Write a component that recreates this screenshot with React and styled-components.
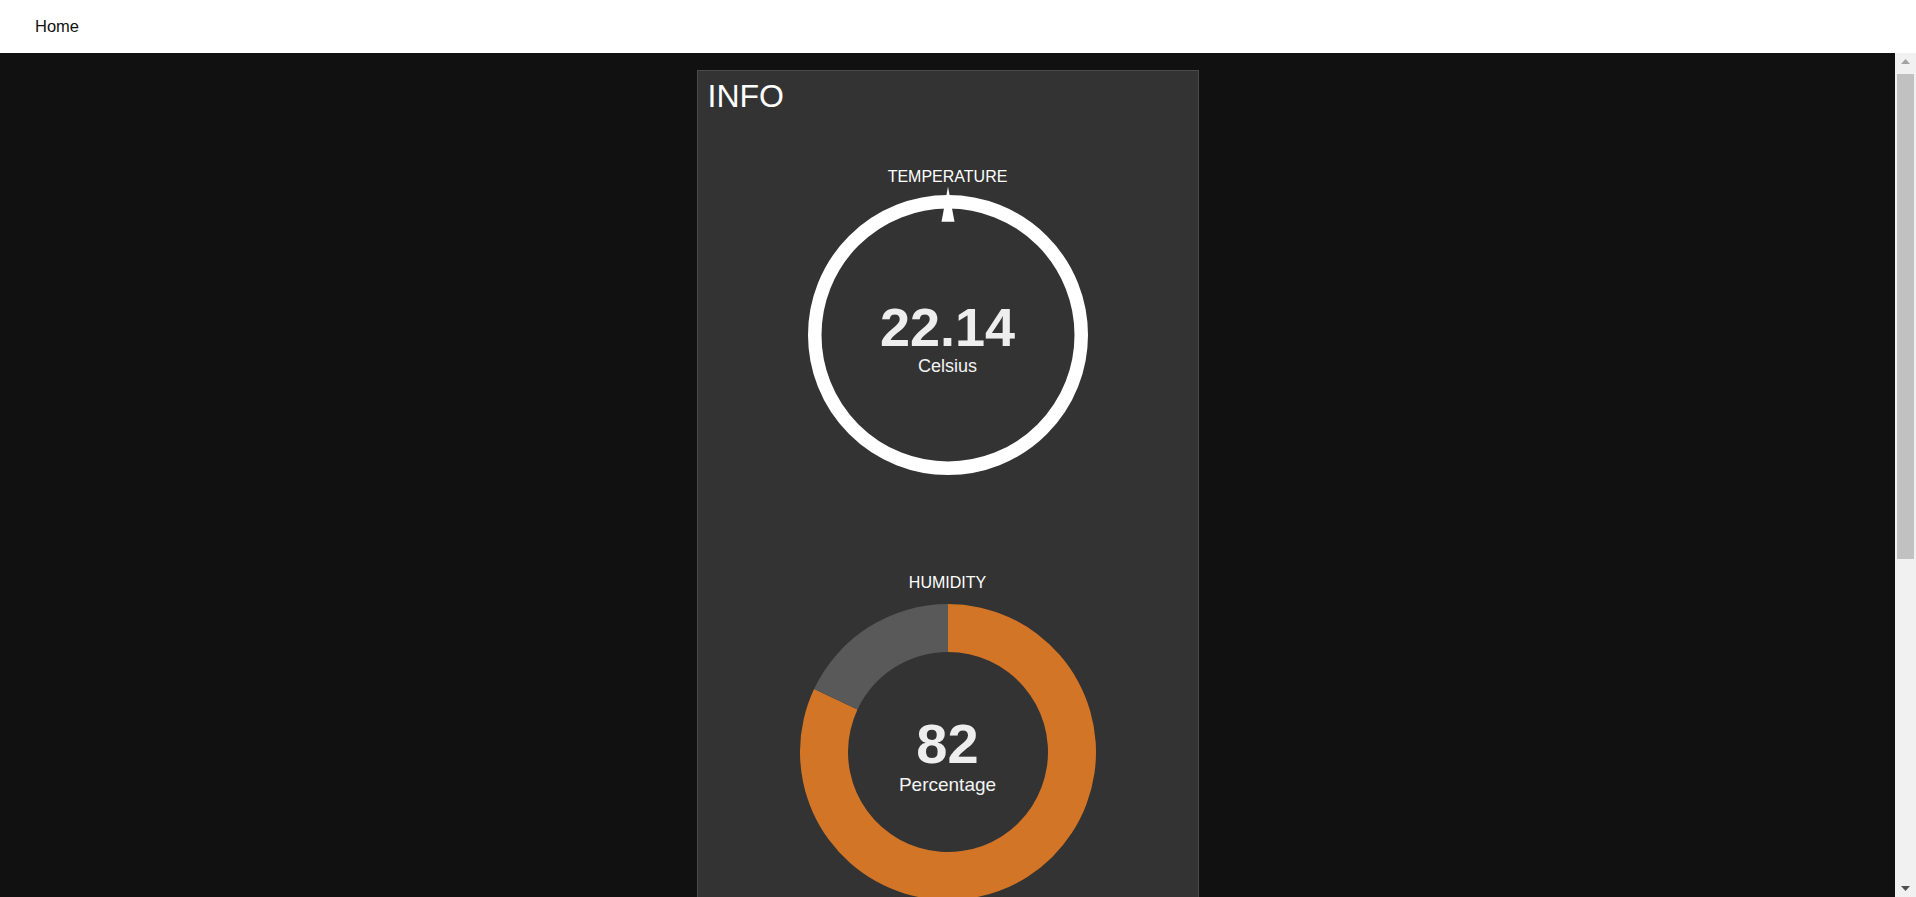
import React from 'react';
import styled, { createGlobalStyle } from 'styled-components';

const GlobalStyle = createGlobalStyle`
	html, body {
		margin: 0;
		height: 100%;
		overflow: hidden;
		font-family: 'Liberation Sans', Arial, sans-serif;
	}
`;

const readings = [
	{ id: 'temp', label: 'TEMPERATURE', value: '22.14', unit: 'Celsius', kind: 'ring' },
	{ id: 'hum', label: 'HUMIDITY', value: '82', unit: 'Percentage', kind: 'donut', percent: 82 },
];

// point on a circle, angle in degrees clockwise from 12 o'clock
const polar = (cx, cy, r, deg) => {
	const a = (deg * Math.PI) / 180;
	return [cx + r * Math.sin(a), cy - r * Math.cos(a)];
};

const sectorPath = (cx, cy, rOut, rIn, from, to) => {
	const large = to - from > 180 ? 1 : 0;
	const [x0, y0] = polar(cx, cy, rOut, from);
	const [x1, y1] = polar(cx, cy, rOut, to);
	const [x2, y2] = polar(cx, cy, rIn, to);
	const [x3, y3] = polar(cx, cy, rIn, from);
	return `M${x0} ${y0} A${rOut} ${rOut} 0 ${large} 1 ${x1} ${y1} L${x2} ${y2} A${rIn} ${rIn} 0 ${large} 0 ${x3} ${y3} Z`;
};

const RingGauge = () => (
	<svg width='300' height='300' viewBox='0 0 300 300'>
		<circle cx='150' cy='149' r='133.25' fill='none' stroke='#ffffff' strokeWidth='13.5' />
		<polygon points='150,0.7 143.5,35.7 156.5,35.7' fill='#ffffff' />
	</svg>
);

const DonutGauge = ({ percent }) => {
	const cut = (percent / 100) * 360;
	return (
		<svg width='296' height='296' viewBox='0 0 296 296'>
			<path d={sectorPath(148, 148, 148, 100, 0, cut)} fill='#d37526' />
			<path d={sectorPath(148, 148, 148, 100, cut, 360)} fill='#595959' />
		</svg>
	);
};

const Arrow = ({ up, color }) => (
	<svg width='9' height='5' viewBox='0 0 9 5'>
		<polygon points={up ? '4.5,0 9,5 0,5' : '0,0 9,0 4.5,5'} fill={color} />
	</svg>
);

const App = () => {
	return (
		<>
			<GlobalStyle />
			<Shell>
				<TopBar>
					<NavLink href='#'>Home</NavLink>
				</TopBar>
				<Body>
					<Main>
						<Panel>
							<Title>INFO</Title>
							{readings.map((r) => (
								<GaugeSection key={r.id} $kind={r.kind}>
									<GaugeLabel>{r.label}</GaugeLabel>
									<ChartWrap $kind={r.kind}>
										{r.kind === 'ring' ? <RingGauge /> : <DonutGauge percent={r.percent} />}
										<Readout $kind={r.kind}>
											<Value $size={r.kind === 'ring' ? 54 : 56}>{r.value}</Value>
											<Unit $size={r.kind === 'ring' ? 18 : 19}>{r.unit}</Unit>
										</Readout>
									</ChartWrap>
								</GaugeSection>
							))}
						</Panel>
					</Main>
					<ScrollRail>
						<RailButton>
							<Arrow up color='#a3a3a3' />
						</RailButton>
						<RailThumb />
						<RailButton>
							<Arrow color='#505050' />
						</RailButton>
					</ScrollRail>
				</Body>
			</Shell>
		</>
	);
};

export default App;

const Shell = styled.div`
	display: flex;
	flex-direction: column;
	height: 100vh;
`;

const TopBar = styled.header`
	flex: 0 0 53px;
	display: flex;
	align-items: center;
	padding-left: 35px;
	background-color: #ffffff;
`;

const NavLink = styled.a`
	font-size: 16.5px;
	color: #111111;
	text-decoration: none;
`;

const Body = styled.div`
	flex: 1;
	display: flex;
	min-height: 0;
`;

const Main = styled.main`
	flex: 1;
	overflow: hidden;
	background-color: #111111;
	padding: 17px 0;
	box-sizing: border-box;
`;

const ScrollRail = styled.div`
	flex: 0 0 21px;
	display: flex;
	flex-direction: column;
	background-color: #f1f1f1;
`;

const RailButton = styled.div`
	flex: 0 0 17px;
	display: flex;
	align-items: center;
	justify-content: center;
`;

const RailThumb = styled.div`
	height: 485px;
	margin: 4px 2px 0;
	margin-bottom: auto;
	background-color: #c1c1c1;
`;

const Panel = styled.section`
	width: 500px;
	min-height: 1373px;
	margin: 0 auto;
	padding: 6.5px 0 0;
	box-sizing: content-box;
	background-color: #333333;
	border: 1px solid #4b4b4b;
`;

const Title = styled.h2`
	margin: 0;
	padding-left: 10px;
	font-size: 32px;
	font-weight: normal;
	line-height: normal;
	color: #ffffff;
`;

const GaugeSection = styled.div`
	display: flex;
	flex-direction: column;
	align-items: center;
	margin-top: ${(p) => (p.$kind === 'ring' ? '53.5px' : '88px')};
`;

const GaugeLabel = styled.div`
	font-size: 16px;
	line-height: 18.4px;
	color: #ffffff;
`;

const ChartWrap = styled.div`
	position: relative;
	display: flex;
	margin-top: ${(p) => (p.$kind === 'ring' ? '-0.2px' : '11.6px')};
`;

const Readout = styled.div`
	position: absolute;
	left: 0;
	right: 0;
	top: 0;
	height: ${(p) => (p.$kind === 'ring' ? '298px' : '296px')};
	padding-top: 2px;
	box-sizing: border-box;
	display: flex;
	flex-direction: column;
	align-items: center;
	justify-content: center;
`;

const Value = styled.div`
	font-size: ${(p) => p.$size}px;
	font-weight: bold;
	line-height: normal;
	margin-bottom: -2px;
	color: #eeeeee;
`;

const Unit = styled.div`
	font-size: ${(p) => p.$size}px;
	line-height: normal;
	color: #f4f4f4;
`;
